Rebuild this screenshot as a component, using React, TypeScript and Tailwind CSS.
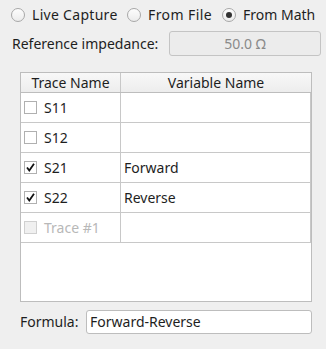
import React from "react";

const font = { fontFamily: '"Noto Sans", "Open Sans", sans-serif' };

function Radio({ checked, label, w, track }: { checked?: boolean; label: string; w: string; track?: string }) {
  return (
    <div className={`flex items-center ${w}`}>
      <div className="w-[14px] h-[14px] rounded-full border border-[#a8a8a8] bg-gradient-to-b from-[#fdfdfd] to-[#ececec] flex items-center justify-center shrink-0">
        {checked && <div className="w-[6px] h-[6px] rounded-full bg-[#333]" />}
      </div>
      <span className={`ml-[7px] text-[14px] text-[#1e1e1e] leading-none whitespace-nowrap ${track ?? ""}`}>{label}</span>
    </div>
  );
}

function Check({ checked, disabled }: { checked?: boolean; disabled?: boolean }) {
  return (
    <div
      className={`w-[13px] h-[13px] border ${disabled ? "border-[#d0d0d0] bg-[#f0f0f0]" : "border-[#b0b0b0] bg-white"} flex items-center justify-center shrink-0`}
    >
      {checked && (
        <svg width="11" height="11" viewBox="0 0 11 11">
          <path d="M2 5.5 L4.3 8.5 L9 1.8" stroke="#111" strokeWidth="1.8" fill="none" />
        </svg>
      )}
    </div>
  );
}

const rows = [
  { name: "S11", v: "", c: false },
  { name: "S12", v: "", c: false },
  { name: "S21", v: "Forward", c: true },
  { name: "S22", v: "Reverse", c: true },
  { name: "Trace #1", v: "", c: false, d: true },
];

export default function App() {
  return (
    <div style={font} className="w-[326px] h-[349px] bg-[#efefef] text-[#1e1e1e] text-[14px] overflow-hidden">
      <div className="flex items-center pl-[11px] pt-[2px] h-[28px]">
        <Radio label="Live Capture" w="w-[116px]" track="tracking-[0.3px]" />
        <Radio label="From File" w="w-[95px]" track="tracking-[0.4px]" />
        <Radio checked label="From Math" w="w-[100px]" />
      </div>
      <div className="flex items-center mt-[3px] h-[25px]">
        <span className="pl-[12px] w-[169px] leading-none">Reference impedance:</span>
        <div className="w-[152px] h-[25px] border border-[#c4c4c4] rounded-[3px] bg-[#ececec] flex items-center justify-center text-[#8a8a8a]">
          50.0 Ω
        </div>
      </div>
      <div className="ml-[20px] mt-[16px] w-[292px] h-[230px] border border-[#bdbdbd] bg-white flex flex-col">
        <div className="flex h-[20px] bg-gradient-to-b from-[#f8f8f8] to-[#ededed] border-b border-[#bdbdbd] shrink-0">
          <div className="w-[100px] border-r border-[#c8c8c8] flex items-center justify-center leading-none">Trace Name</div>
          <div className="flex-1 flex items-center justify-center leading-none">Variable Name</div>
        </div>
        <div className="flex flex-col w-[290px] border-r border-[#c8c8c8]">
          {rows.map((r) => (
            <div key={r.name} className="flex h-[30px] border-b border-[#c8c8c8]">
              <div className="w-[100px] border-r border-[#c8c8c8] flex items-center pl-[3px]">
                <Check checked={r.c} disabled={r.d} />
                <span className={`ml-[7px] leading-none ${r.d ? "text-[#b8b8b8]" : ""}`}>{r.name}</span>
              </div>
              <div className="flex-1 flex items-center pl-[3px] leading-none">{r.v}</div>
            </div>
          ))}
        </div>
      </div>
      <div className="flex items-center mt-[8px] h-[24px]">
        <span className="pl-[20px] w-[86px] leading-none">Formula:</span>
        <div className="w-[226px] h-[24px] border border-[#bdbdbd] rounded-[3px] bg-white flex items-center pl-[3px] leading-none">
          Forward-Reverse
        </div>
      </div>
    </div>
  );
}
